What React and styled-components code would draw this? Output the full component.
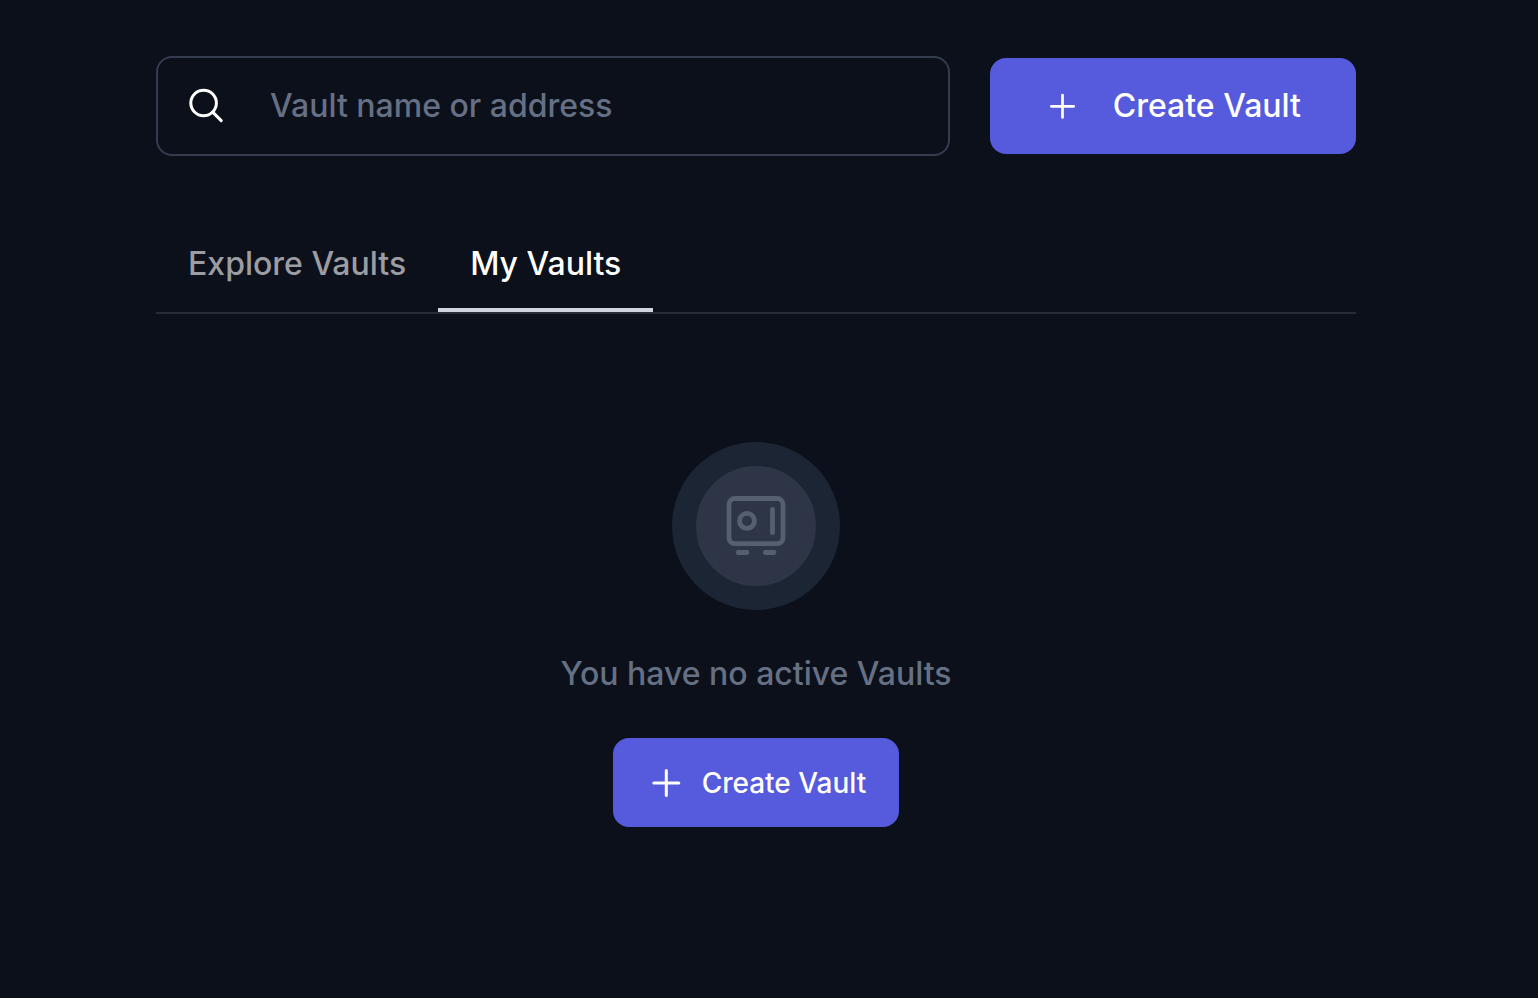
import React from "react";
import styled, { createGlobalStyle } from "styled-components";

const GlobalStyle = createGlobalStyle`
  *, *::before, *::after { box-sizing: border-box; }
  body {
    margin: 0;
    background: #0c101a;
    color: #ffffff;
    font-family: Inter, "Liberation Sans", sans-serif;
    font-optical-sizing: none;
    font-size: 32px;
    font-weight: 500;
    line-height: 40px;
    -webkit-font-smoothing: antialiased;
  }
  button, input { font: inherit; font-optical-sizing: none; }
`;

const Page = styled.main`
  min-height: 100vh;
  padding: 56px 182px 56px 156px;
`;

const Toolbar = styled.div`
  display: flex;
  align-items: center;
  gap: 40px;
`;

const SearchBox = styled.label`
  display: flex;
  flex: 1;
  align-items: center;
  gap: 44px;
  min-width: 0;
  height: 100px;
  padding: 0 28px;
  border: 2px solid #343c4f;
  border-radius: 16px;
`;

const SearchInput = styled.input`
  flex: 1;
  min-width: 0;
  height: 40px;
  padding: 0;
  border: 0;
  outline: 0;
  background: transparent;
  color: #ffffff;
  &::placeholder { color: #667085; opacity: 1; }
`;

const Icon = styled.svg`
  flex: none;
  display: block;
  width: ${(p) => p.$size}px;
  height: ${(p) => p.$size}px;
  fill: none;
  stroke: currentColor;
  stroke-linecap: round;
  stroke-linejoin: round;
`;

const Button = styled.button`
  display: flex;
  flex: none;
  align-items: center;
  gap: ${(p) => (p.$large ? 34 : 16)}px;
  height: ${(p) => (p.$large ? 96 : 89)}px;
  padding: 0 ${(p) => (p.$large ? 55 : 33)}px;
  border: 0;
  border-radius: 16px;
  background: #565adc;
  color: #ffffff;
  font-size: ${(p) => (p.$large ? 32 : 28)}px;
  white-space: nowrap;
  cursor: pointer;
`;

const Tabs = styled.div`
  display: flex;
  margin-top: 60px;
  border-bottom: 2px solid #282c37;
`;

const Tab = styled.button`
  height: 96px;
  padding: 4px 32px 0;
  border: 0;
  border-bottom: 4px solid ${(p) => (p.$active ? "#d0d5dd" : "transparent")};
  background: transparent;
  color: ${(p) => (p.$active ? "#ffffff" : "#9b9da2")};
  white-space: nowrap;
  cursor: pointer;
`;

const EmptyState = styled.section`
  display: flex;
  flex-direction: column;
  align-items: center;
  padding-top: 128px;
`;

const Emblem = styled.div`
  display: grid;
  place-items: center;
  width: 168px;
  height: 168px;
  border: 24px solid #1c2533;
  border-radius: 50%;
  background: #2d3546;
  color: #565f70;
`;

const Message = styled.p`
  margin: 44px 0;
  color: #667085;
`;

function CreateButton({ large }) {
  return (
    <Button type="button" $large={large}>
      {large ? (
        <Icon $size={34} viewBox="0 0 34 34" strokeWidth="2.7" aria-hidden="true">
          <path d="M6.3 17.3H28.7M17.5 6.1V28.5" />
        </Icon>
      ) : (
        <Icon $size={40} viewBox="0 0 40 40" strokeWidth="3" aria-hidden="true">
          <path d="M7.8 20H32.8M20.3 7.5V32.5" />
        </Icon>
      )}
      Create Vault
    </Button>
  );
}

export default function App() {
  return (
    <Page>
      <GlobalStyle />
      <Toolbar>
        <SearchBox>
          <Icon $size={40} viewBox="0 0 40 40" strokeWidth="3" aria-hidden="true">
            <circle cx="17.6" cy="17" r="12.8" />
            <path d="M26.7 26.1L35.2 34.6" />
          </Icon>
          <SearchInput type="text" placeholder="Vault name or address" aria-label="Vault name or address" />
        </SearchBox>
        <CreateButton large />
      </Toolbar>
      <Tabs role="tablist">
        <Tab type="button" role="tab" aria-selected="false">Explore Vaults</Tab>
        <Tab type="button" role="tab" aria-selected="true" $active>My Vaults</Tab>
      </Tabs>
      <EmptyState>
        <Emblem>
          <Icon $size={72} viewBox="0 0 72 72" strokeWidth="4.8" aria-hidden="true">
            <rect x="9" y="8.5" width="54" height="45.2" rx="6" />
            <circle cx="27" cy="30.9" r="7.5" />
            <path d="M52.5 19.3V42.7M18.2 62.5H27M45.3 62.5H54" />
          </Icon>
        </Emblem>
        <Message>You have no active Vaults</Message>
        <CreateButton />
      </EmptyState>
    </Page>
  );
}
